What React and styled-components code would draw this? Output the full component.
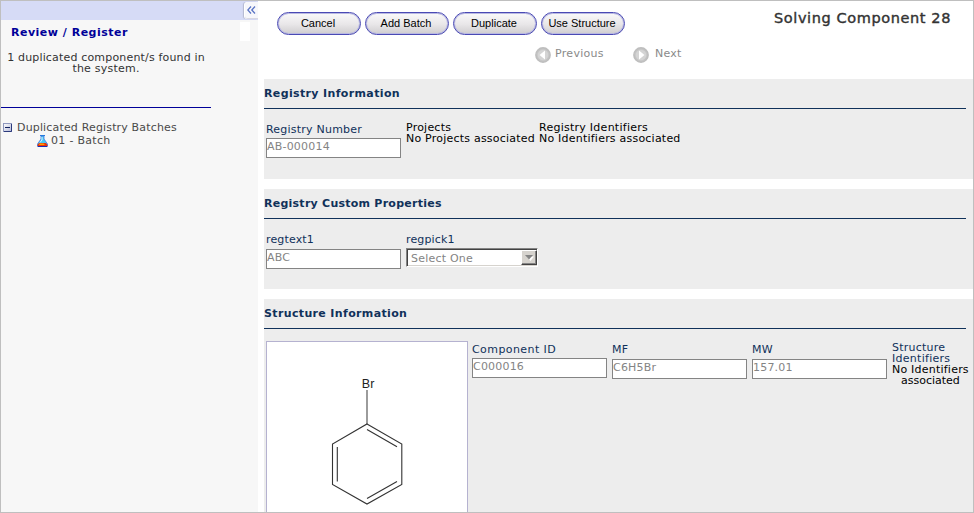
import React from "react";
import styled, { createGlobalStyle } from "styled-components";

const GlobalStyle = createGlobalStyle`
  *, *::before, *::after { box-sizing: border-box; }
  body { margin: 0; overflow: hidden; }
  button, input { font: inherit; }
`;

const Window = styled.div`
  display: flex;
  width: 974px;
  height: 513px;
  border: 1px solid #bfbfbf;
  overflow: hidden;
  background: #fff;
  font: 11px/11px "DejaVu Sans", Verdana, sans-serif;
  color: #000;
  white-space: nowrap;
`;

const Text = styled.div`
  letter-spacing: ${(p) => p.$track ?? 0.22}px;
`;

/* ---------- sidebar ---------- */

const Sidebar = styled.aside`
  flex: none;
  width: 257px;
  background: #f7f7f7;
  color: #333;
`;

const SidebarBar = styled.div`
  display: flex;
  justify-content: flex-end;
  height: 19px;
  background: #d6dbf6;
`;

const CollapseButton = styled.button`
  display: flex;
  align-items: center;
  justify-content: center;
  width: 13px;
  height: 17px;
  margin: 1px 0 0;
  padding: 0 0 1px;
  border: 0;
  border-bottom: 1px solid #d8d8e2;
  border-radius: 3px 0 0 3px;
  background: #f7f7fb;
  box-shadow: -1px 0 0 #fff, -2px 0 1px #b4b8d0;
`;

const SidebarHeader = styled.div`
  display: flex;
  justify-content: space-between;
  height: 23px;
  padding: 2px 8px 0 10px;
`;

const SidebarTitle = styled(Text)`
  padding-top: 5px;
  font-weight: bold;
  color: #000099;
`;

const Blank = styled.div`
  width: 10px;
  height: 19px;
  background: #fff;
`;

const Notice = styled.div`
  width: 210px;
  height: 65px;
  padding-top: 9px;
  border-bottom: 1px solid #000099;
  text-align: center;
`;

const Tree = styled.div`
  padding: 13px 0 0 2px;
  color: #4a4a4a;
`;

const TreeRow = styled.div`
  display: flex;
  align-items: center;
  gap: ${(p) => (p.$child ? 3 : 5)}px;
  height: 13px;
  padding-left: ${(p) => (p.$child ? 34 : 0)}px;
`;

/* ---------- main column ---------- */

const Main = styled.main`
  flex: 1;
  padding-left: 6px;
`;

const Header = styled.header`
  height: 78px;
  padding-top: 11px;
`;

const TopRow = styled.div`
  display: flex;
  justify-content: space-between;
  padding: 0 22px 0 13px;
`;

const Buttons = styled.div`
  display: flex;
  gap: 4px;
`;

const PillButton = styled.button`
  width: 84px;
  height: 23px;
  padding: 0 2px 1px 0;
  border: 1.5px solid #4a4ab4;
  border-radius: 12px;
  background: linear-gradient(#fafafa, #e8e6e8 55%, #cfcdcf);
  font: 11px/18px "Liberation Sans", Arial, sans-serif;
  color: #000;
  box-shadow: inset 0 0 0 1px #b9b9e2;
`;

const PageTitle = styled.h1`
  height: 23px;
  margin: -1px 0 0;
  font: 14.5px/14px "DejaVu Sans", Verdana, sans-serif;
  letter-spacing: 0.6px;
  -webkit-text-stroke: 0.4px #333;
  color: #333;
`;

const Pager = styled.nav`
  display: flex;
  gap: 29px;
  padding: 12px 0 0 271px;
  color: #8a8a8a;
`;

const PagerItem = styled.div`
  display: flex;
  gap: 4px;
`;

const PagerLabel = styled(Text)`
  padding: 1px 0 0 ${(p) => p.$indent || 0}px;
`;

const Panel = styled.section`
  height: ${(p) => (p.$last ? 214 : 100)}px;
  margin-bottom: ${(p) => (p.$last ? 0 : 10)}px;
  background: #ededed;
`;

const PanelTitle = styled.h2`
  width: 702px;
  height: 30px;
  margin: 0;
  padding-top: 9px;
  border-bottom: 1px solid #10315a;
  font-size: 11px;
  line-height: 11px;
  letter-spacing: ${(p) => p.$track ?? 0.36}px;
  color: #10315a;
`;

const Fields = styled.div`
  display: grid;
  grid-template-columns: ${(p) => p.$columns};
  align-items: start;
  padding-left: 2px;
`;

const Field = styled.div`
  padding-top: ${(p) => p.$top}px;
`;

const Label = styled(Text)`
  height: ${(p) => p.$h || 11}px;
  color: #10315a;
`;

const Input = styled.input`
  display: block;
  width: 135px;
  height: 20px;
  padding: 0 0 4px;
  border: 1px solid #848484;
  border-radius: 0;
  background: #fff;
  line-height: 13px;
  letter-spacing: 0.2px;
  color: #848484;
`;

const Select = styled.div`
  display: flex;
  justify-content: space-between;
  width: 132px;
  height: 19px;
  border: 1px solid;
  border-color: #848484 #fff #fff #848484;
  box-shadow: inset 1px 1px #424242, inset -1px -1px #d6d3ce;
  background: #fff;
  color: #848484;
`;

const SelectText = styled(Text)`
  padding: 4px 0 0 4px;
`;

const SelectArrow = styled.div`
  display: flex;
  align-items: center;
  justify-content: center;
  width: 16px;
  height: 15px;
  margin: 1px 0 0;
  border: 1px solid;
  border-color: #fff #424242 #424242 #fff;
  box-shadow: inset -1px -1px #848484;
  background: #d6d3ce;
`;

const StructureBox = styled.div`
  width: 202px;
  height: 180px;
  margin-top: 12px;
  border: 1px solid #b5b2d0;
  background: #fff;
  overflow: hidden;
`;

const Indented = styled(Text)`
  padding-left: 9px;
`;

const CollapseIcon = () => (
  <svg width="9" height="8" viewBox="0 0 9 8" fill="none" stroke="#5a74c4" strokeWidth="1.3">
    <path d="M4 .5.8 4 4 7.5M8 .5 4.8 4 8 7.5" />
  </svg>
);

const MinusBox = () => (
  <svg width="9" height="9" viewBox="0 0 9 9">
    <defs>
      <linearGradient id="minusFill" x2="1" y2="1">
        <stop stopColor="#fff" />
        <stop offset="1" stopColor="#b4b9d8" />
      </linearGradient>
    </defs>
    <rect x=".5" y=".5" width="8" height="8" fill="url(#minusFill)" stroke="#8f98be" />
    <path d="M8.5 1v7.5H1" fill="none" stroke="#2c3a7c" />
    <path d="M2 4.5h5" stroke="#10205f" />
  </svg>
);

const Flask = () => (
  <svg width="11" height="12" viewBox="0 0 11 12">
    <path d="M4 1h3v3l3.500 5v2.500H.5V9L4 4z" fill="#49c8f4" stroke="#4a78dc" strokeWidth=".8" />
    <path d="M2 8h7l1.500 2v1H.5v-1z" fill="#e8330c" />
    <path d="M2.500 8.500h4L8 10H2z" fill="#ffa000" />
    <path d="M5 2v3L3 7.500" fill="none" stroke="#d8f8ff" />
    <path d="M3 .5h5" stroke="#2878dc" />
    <path d="M1 11.500h9" stroke="#1c2cae" />
  </svg>
);

const ArrowDisc = ({ flip }) => (
  <svg width="16" height="16" viewBox="0 0 16 16">
    <circle cx="8" cy="8" r="7.1" fill="#c6c6c6" stroke="#bebebe" strokeWidth="1.6" />
    <circle cx="8" cy="8" r="5.300" fill="#d4d4d4" />
    <path d={flip ? "M6 3.500 11.500 8 6 12.500z" : "M10 3.500 4.500 8l5.500 4.500z"} fill="#fff" />
  </svg>
);

const DropIcon = () => (
  <svg width="9" height="6" viewBox="0 0 9 6">
    <path d="M1.500 1.500h7.500L5.500 6z" fill="#fff" />
    <path d="M0 0h8L4 4.500z" fill="#848484" />
  </svg>
);

const Bromobenzene = () => (
  <svg width="200" height="180" viewBox="267 342 200 180" fill="none" stroke="#333" strokeWidth="1.1">
    <text x="361.700" y="387.500" fill="#222" stroke="none" fontFamily="'Liberation Sans', Arial" fontSize="12.500" letterSpacing=".3">Br</text>
    <path d="M367 390v34" strokeWidth="1.3" stroke="#666" />
    <path d="M367 424l34.800 20v40.500l-34.800 19.500-34.500-19.500V444z" />
    <path d="M367 429.500l30 17.200M367 498.500l30-17M337.300 447v34.500" />
  </svg>
);

export default function App() {
  return (
    <>
      <GlobalStyle />
      <Window>
        <Sidebar>
          <SidebarBar>
            <CollapseButton aria-label="Collapse"><CollapseIcon /></CollapseButton>
          </SidebarBar>
          <SidebarHeader>
            <SidebarTitle $track={0.5}>Review / Register</SidebarTitle>
            <Blank />
          </SidebarHeader>
          <Notice>
            <Text $track={0.17}>1 duplicated component/s found in</Text>
            <Text>the system.</Text>
          </Notice>
          <Tree>
            <TreeRow><MinusBox /><Text $track={0.16}>Duplicated Registry Batches</Text></TreeRow>
            <TreeRow $child><Flask /><Text $track={0.3}>01 - Batch</Text></TreeRow>
          </Tree>
        </Sidebar>
        <Main>
          <Header>
            <TopRow>
              <Buttons>
                <PillButton>Cancel</PillButton>
                <PillButton>Add Batch</PillButton>
                <PillButton>Duplicate</PillButton>
                <PillButton>Use Structure</PillButton>
              </Buttons>
              <PageTitle>Solving Component 28</PageTitle>
            </TopRow>
            <Pager>
              <PagerItem><ArrowDisc /><PagerLabel $track={0.3}>Previous</PagerLabel></PagerItem>
              <PagerItem><ArrowDisc flip /><PagerLabel $indent={2} $track={0.3}>Next</PagerLabel></PagerItem>
            </Pager>
          </Header>

          <Panel>
            <PanelTitle>Registry Information</PanelTitle>
            <Fields $columns="140px 133px auto">
              <Field $top={15}>
                <Label $h={14}>Registry Number</Label>
                <Input readOnly defaultValue="AB-000014" />
              </Field>
              <Field $top={13}>
                <Text>Projects</Text>
                <Text>No Projects associated</Text>
              </Field>
              <Field $top={13}>
                <Text $track={0.26}>Registry Identifiers</Text>
                <Text>No Identifiers associated</Text>
              </Field>
            </Fields>
          </Panel>

          <Panel>
            <PanelTitle $track={0.25}>Registry Custom Properties</PanelTitle>
            <Fields $columns="140px auto">
              <Field $top={15}>
                <Label $h={15} $track={0.15}>regtext1</Label>
                <Input readOnly defaultValue="ABC" />
              </Field>
              <Field $top={15}>
                <Label $h={14} $track={0.15}>regpick1</Label>
                <Select><SelectText>Select One</SelectText><SelectArrow><DropIcon /></SelectArrow></Select>
              </Field>
            </Fields>
          </Panel>

          <Panel $last>
            <PanelTitle>Structure Information</PanelTitle>
            <Fields $columns="206px 140px 140px 140px auto">
              <StructureBox><Bromobenzene /></StructureBox>
              <Field $top={15}>
                <Label $h={14} $track={0.42}>Component ID</Label>
                <Input readOnly defaultValue="C000016" />
              </Field>
              <Field $top={15}>
                <Label $h={15}>MF</Label>
                <Input readOnly defaultValue="C6H5Br" />
              </Field>
              <Field $top={15}>
                <Label $h={15}>MW</Label>
                <Input readOnly defaultValue="157.01" />
              </Field>
              <Field $top={13}>
                <Label>Structure</Label>
                <Label $track={0.28}>Identifiers</Label>
                <Text>No Identifiers</Text>
                <Indented $track={0}>associated</Indented>
              </Field>
            </Fields>
          </Panel>
        </Main>
      </Window>
    </>
  );
}
